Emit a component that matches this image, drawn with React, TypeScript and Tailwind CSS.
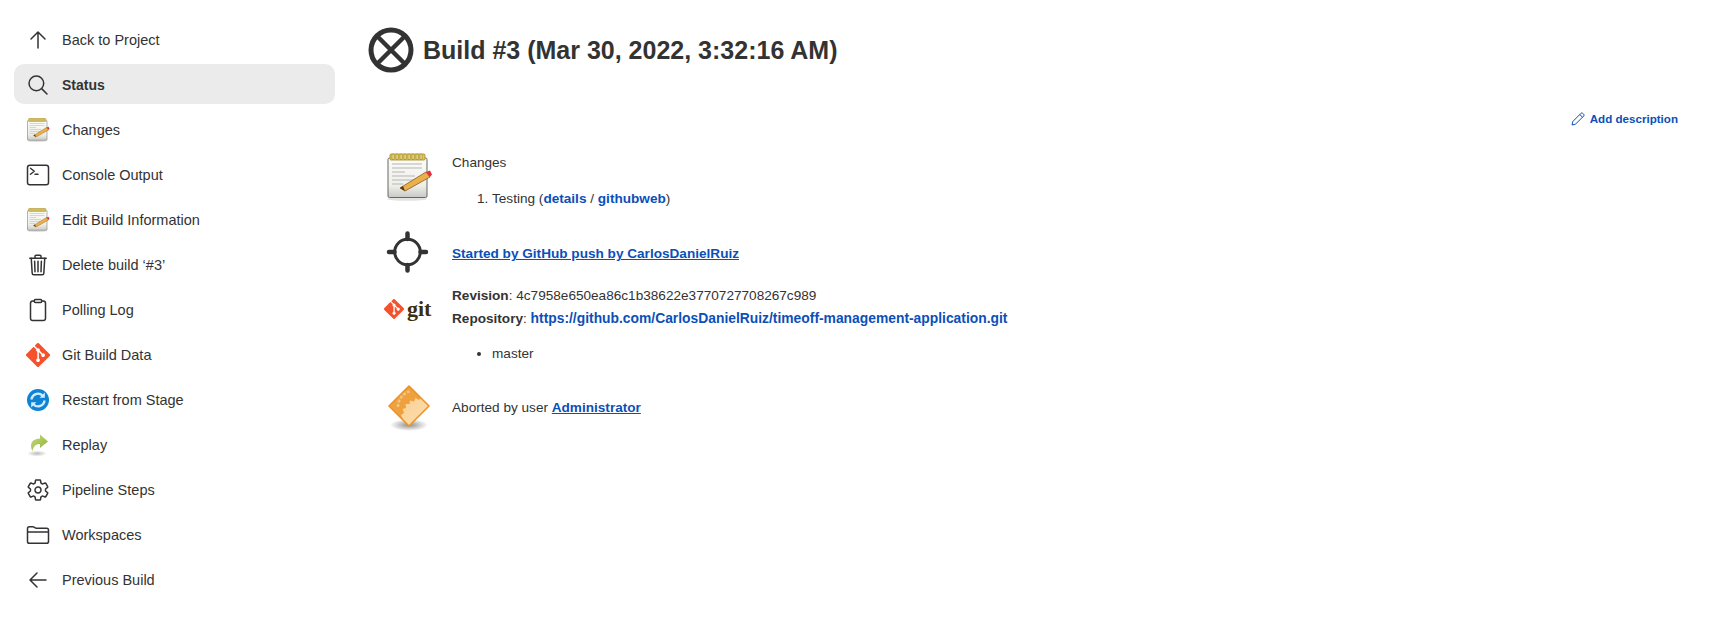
import React from "react";
import {
  IoClipboardOutline,
  IoFolderOutline,
  IoSearchOutline,
  IoSettingsOutline,
  IoTerminalOutline,
  IoTrashOutline,
} from "react-icons/io5";

const Notepad = ({ size = 24, id }: { size?: number; id: string }) => (
  <svg width={size} height={size} viewBox="0 0 48 48">
    <defs>
      <linearGradient id={id} x1="0" y1="0" x2="0" y2="1">
        <stop offset="0" stopColor="#fbfbf8" />
        <stop offset="0.7" stopColor="#efefea" />
        <stop offset="1" stopColor="#c8c8c4" />
      </linearGradient>
    </defs>
    <ellipse cx="22" cy="46" rx="20" ry="1.800" fill="#e2e2e2" />
    <rect x="3" y="5" width="39" height="39.500" rx="1.500" fill={`url(#${id})`} stroke="#666" strokeWidth="1" />
    <rect x="5" y="1" width="35" height="6" rx="1" fill="#e4c95a" stroke="#a18a26" strokeWidth="0.800" />
    {[8, 12, 16, 20, 24, 28, 32, 36].map((x) => (
      <rect key={x} x={x - 1} y="1" width="2.200" height="5.500" rx="1" fill="#f3e595" stroke="#8d7619" strokeWidth="0.600" />
    ))}
    {[11, 15, 19, 23, 27, 31].map((y, i) => (
      <line key={y} x1="7" y1={y} x2={i === 2 ? 20 : i === 3 ? 30 : i === 5 ? 18 : 37} y2={y} stroke="#b5b5b5" strokeWidth="1" />
    ))}
    <path d="M15 35 L41 19 L45 24 L20 38 Z" fill="#e9b04c" stroke="#8a5a18" strokeWidth="0.800" />
    <path d="M15 35 L18 33 L20 38 Z" fill="#553a14" />
    <path d="M41 19 L45 17.500 L47 21.500 L45 24 Z" fill="#e2323b" />
  </svg>
);

const GitDiamond = ({ size = 24 }: { size?: number }) => (
  <svg width={size} height={size} viewBox="0 0 92 92">
    <path fill="#f4512c" d="M90.156 41.965 50.036 1.848a5.918 5.918 0 0 0-8.372 0l-8.328 8.332 10.566 10.566a7.03 7.03 0 0 1 7.23 1.684 7.034 7.034 0 0 1 1.669 7.277l10.187 10.184a7.028 7.028 0 0 1 7.278 1.672 7.040 7.040 0 0 1 0 9.957 7.050 7.050 0 0 1-9.965 0 7.044 7.044 0 0 1-1.528-7.660l-9.500-9.497V59.360a7.040 7.040 0 0 1 1.860 11.290 7.040 7.040 0 0 1-9.957 0 7.040 7.040 0 0 1 0-9.958 7.060 7.060 0 0 1 2.304-1.539V33.926a7.049 7.049 0 0 1-3.820-9.234L29.242 14.272 1.730 41.777a5.925 5.925 0 0 0 0 8.371L41.852 90.270a5.925 5.925 0 0 0 8.370 0l39.934-39.934a5.925 5.925 0 0 0 0-8.371" />
  </svg>
);

const RestartIcon = () => (
  <svg width="24" height="24" viewBox="0 0 24 24">
    <circle cx="12" cy="12" r="11" fill="#0f83d6" />
    <path d="M5.500 11.500a6.500 6.500 0 0 1 11-4" fill="none" stroke="#d5ecfb" strokeWidth="2.400" />
    <path d="M18.500 12.500a6.500 6.500 0 0 1-11 4" fill="none" stroke="#d5ecfb" strokeWidth="2.400" />
    <path d="M18.800 4.600v5.200h-5.200z" fill="#d5ecfb" />
    <path d="M5.200 19.400v-5.200h5.200z" fill="#d5ecfb" />
  </svg>
);

const ReplayIcon = () => (
  <svg width="24" height="24" viewBox="0 0 24 24">
    <defs>
      <radialGradient id="rpsh">
        <stop offset="0" stopColor="#bbb" />
        <stop offset="1" stopColor="#fff" />
      </radialGradient>
      <linearGradient id="rpgr" x1="0" y1="0" x2="1" y2="1">
        <stop offset="0" stopColor="#c6da80" />
        <stop offset="1" stopColor="#8fb338" />
      </linearGradient>
    </defs>
    <ellipse cx="11" cy="20.500" rx="10" ry="3" fill="url(#rpsh)" />
    <path d="M14 1.500 L22 8.500 L14 15 L14 11 C9.500 11 7.500 13.500 6.500 18 C4 13 4 6 14 5.500 Z" fill="url(#rpgr)" />
  </svg>
);

const AbortedIcon = () => (
  <svg width="48" height="48" viewBox="0 0 48 48">
    <defs>
      <radialGradient id="absh">
        <stop offset="0" stopColor="#8f8f8f" />
        <stop offset="1" stopColor="#fff" />
      </radialGradient>
      <linearGradient id="abfl" x1="0" y1="0" x2="1" y2="1">
        <stop offset="0" stopColor="#f8c98b" />
        <stop offset="1" stopColor="#fddfae" />
      </linearGradient>
    </defs>
    <ellipse cx="24" cy="41" rx="19" ry="6" fill="url(#absh)" />
    <path d="M24 2 L44 22 L24 42 L4 22 Z" fill="url(#abfl)" />
    <path d="M24 2.500 L4.500 22 L18 35.500 L16 31 L19 29 L17.500 25 L21 24 L20.500 20 L24.500 20 L25 16.500 L29 17.500 L30.500 14 L34 16 L36 14 Z" fill="#eea13c" />
    <path d="M13 23 C13 15 18 9 26 7" fill="none" stroke="#f7c481" strokeWidth="2.500" strokeDasharray="3 1.500" />
    <path d="M24 2 L44 22 L24 42 L4 22 Z" fill="none" stroke="#ee9226" strokeWidth="1.600" strokeLinejoin="round" />
  </svg>
);

const Crosshair = () => (
  <svg width="48" height="48" viewBox="0 0 48 48" fill="none" stroke="#333" strokeLinecap="round">
    <circle cx="22.500" cy="24" r="12.800" strokeWidth="3" />
    <path d="M22.500 5.500V11M22.500 37V42.500M4 24H9.500M35.500 24H41" strokeWidth="4.500" />
  </svg>
);

const ArrowIcon = ({ d }: { d: string }) => (
  <svg width="24" height="24" viewBox="0 0 24 24" fill="none" stroke="#333" strokeWidth="1.500" strokeLinecap="round" strokeLinejoin="round">
    <path d={d} />
  </svg>
);

const icon = "h-[24px] w-[24px] text-[#333]";

const items: { label: string; icon: React.ReactNode; active?: boolean }[] = [
  { label: "Back to Project", icon: <ArrowIcon d="M12 20V4M5 11l7-7 7 7" /> },
  { label: "Status", active: true, icon: <IoSearchOutline className={icon} /> },
  { label: "Changes", icon: <Notepad id="np1" /> },
  { label: "Console Output", icon: <IoTerminalOutline className={icon} /> },
  { label: "Edit Build Information", icon: <Notepad id="np2" /> },
  { label: "Delete build ‘#3’", icon: <IoTrashOutline className={icon} /> },
  { label: "Polling Log", icon: <IoClipboardOutline className={icon} /> },
  { label: "Git Build Data", icon: <GitDiamond /> },
  { label: "Restart from Stage", icon: <RestartIcon /> },
  { label: "Replay", icon: <ReplayIcon /> },
  { label: "Pipeline Steps", icon: <IoSettingsOutline className={icon} /> },
  { label: "Workspaces", icon: <IoFolderOutline className={icon} /> },
  { label: "Previous Build", icon: <ArrowIcon d="M20 12H4M11 5l-7 7 7 7" /> },
];

const linkClass = "font-bold text-[#0b4fb8]";

export default function App() {
  return (
    <div className="flex min-h-[630px] bg-white text-[13.6px] leading-[22px] text-[#333] font-['Liberation_Sans',Arial,sans-serif]">
      <nav className="flex w-[367px] shrink-0 flex-col gap-[5px] pl-[14px] pr-[32px] pt-[19px] text-[14.500px]">
        {items.map((it) => (
          <div
            key={it.label}
            className={`flex h-[40px] items-center gap-[12px] rounded-[10px] pl-[12px] pt-[2px] ${it.active ? "bg-[#ebebeb] text-[14px] font-bold" : ""}`}
          >
            <span className="flex h-[24px] w-[24px] shrink-0 items-center justify-center">{it.icon}</span>
            <span>{it.label}</span>
          </div>
        ))}
      </nav>
      <main className="flex-1 pr-[32px] pt-[26px]">
        <div className="flex h-[48px] items-center gap-[8px]">
          <svg width="48" height="48" viewBox="0 0 48 48" fill="none" stroke="#333" strokeWidth="5">
            <circle cx="24" cy="24" r="20" />
            <path d="M10 10 38 38M38 10 10 38" strokeWidth="4.500" />
          </svg>
          <h1 className="text-[25px] font-bold leading-[32px]">Build #3 (Mar 30, 2022, 3:32:16 AM)</h1>
        </div>
        <div className="mt-[34px] flex h-[22px] items-center justify-end gap-[5px] text-[11.600px] font-bold text-[#0b4fb8]">
          <svg width="14" height="14" viewBox="0 0 14 14" fill="none" stroke="#0b4fb8" strokeWidth="1" strokeLinejoin="round">
            <path d="M1 13l.8-3.500L10 1.300c.5-.5 1.200-.5 1.700 0l1 1c.5.5.5 1.200 0 1.700L4.500 12.200 1 13ZM8.800 2.500l2.700 2.700" />
          </svg>
          <span>Add description</span>
        </div>
        <div className="mt-[23px] flex gap-[19px] pl-[18px]">
          <Notepad size={48} id="np3" />
          <div className="-mt-[2px]">
            <div className="pt-[1px]">Changes</div>
            <ol className="mt-[14px] list-decimal pl-[40px]">
              <li>
                Testing (<span className={linkClass}>details</span> / <span className={linkClass}>githubweb</span>)
              </li>
            </ol>
          </div>
        </div>
        <div className="mt-[18px] flex items-center gap-[19px] pl-[18px]">
          <Crosshair />
          <span className={`${linkClass} mt-[4px] underline`}>Started by GitHub push by CarlosDanielRuiz</span>
        </div>
        <div className="mt-[9px] flex gap-[19px] pl-[18px]">
          <span className="-ml-[1px] -mr-[1px] flex h-[48px] w-[50px] shrink-0 items-center gap-[3px]">
            <GitDiamond size={20} />
            <span className="font-['Liberation_Serif',serif] text-[22px] font-bold leading-[20px] text-[#3d2e0f]">git</span>
          </span>
          <div>
            <div>
              <b>Revision</b>: 4c7958e650ea86c1b38622e3770727708267c989
            </div>
            <div>
              <b>Repository</b>: <span className={`${linkClass} text-[13.850px]`}>https://github.com/CarlosDanielRuiz/timeoff-management-application.git</span>
            </div>
            <ul className="mt-[13px] list-disc pl-[40px]">
              <li>master</li>
            </ul>
          </div>
        </div>
        <div className="mt-[19px] flex items-center gap-[19px] pl-[18px]">
          <AbortedIcon />
          <span>
            Aborted by user <span className={`${linkClass} underline`}>Administrator</span>
          </span>
        </div>
      </main>
    </div>
  );
}
